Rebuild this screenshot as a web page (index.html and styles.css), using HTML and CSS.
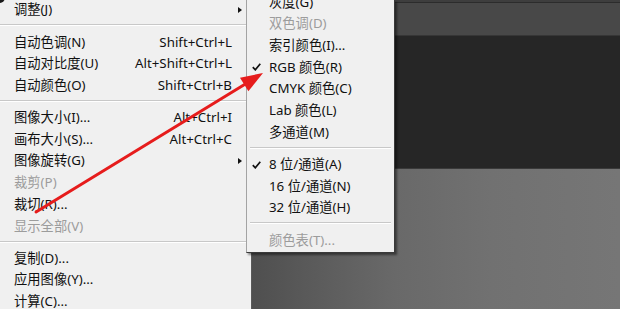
FILE: index.html
```html
<!DOCTYPE html>
<html lang="zh-CN">
<head>
<meta charset="utf-8">
<title>图像模式菜单</title>
<link rel="stylesheet" href="styles.css">
</head>
<body>
<div class="screen">
  <div class="menu main">
    <div class="list">
      <div class="item"><span class="label">调整(J)</span><span class="sub"></span></div>
      <div class="sep"></div>
      <div class="item"><span class="label">自动色调(N)</span><span class="key">Shift+Ctrl+L</span></div>
      <div class="item"><span class="label">自动对比度(U)</span><span class="key">Alt+Shift+Ctrl+L</span></div>
      <div class="item"><span class="label">自动颜色(O)</span><span class="key">Shift+Ctrl+B</span></div>
      <div class="sep"></div>
      <div class="item"><span class="label">图像大小(I)...</span><span class="key">Alt+Ctrl+I</span></div>
      <div class="item"><span class="label">画布大小(S)...</span><span class="key">Alt+Ctrl+C</span></div>
      <div class="item"><span class="label">图像旋转(G)</span><span class="sub"></span></div>
      <div class="item disabled"><span class="label">裁剪(P)</span></div>
      <div class="item"><span class="label">裁切(R)...</span></div>
      <div class="item disabled"><span class="label">显示全部(V)</span></div>
      <div class="sep"></div>
      <div class="item"><span class="label">复制(D)...</span></div>
      <div class="item"><span class="label">应用图像(Y)...</span></div>
      <div class="item"><span class="label">计算(C)...</span></div>
    </div>
  </div>
  <div class="workspace">
    <div class="tabbar"></div>
    <div class="optbar"></div>
    <div class="panel"></div>
    <div class="canvas"></div>
  </div>
  <div class="menu submenu">
    <div class="list">
      <div class="item"><span class="chk"></span><span class="label">灰度(G)</span></div>
      <div class="item disabled"><span class="chk"></span><span class="label">双色调(D)</span></div>
      <div class="item"><span class="chk"></span><span class="label">索引颜色(I)...</span></div>
      <div class="item"><span class="chk"><svg width="9" height="8" viewBox="0 0 9 8"><path d="M0.8 4.2 L3.3 6.8 L8.3 0.8" fill="none" stroke="#111" stroke-width="1.7"/></svg></span><span class="label">RGB 颜色(R)</span></div>
      <div class="item"><span class="chk"></span><span class="label">CMYK 颜色(C)</span></div>
      <div class="item"><span class="chk"></span><span class="label">Lab 颜色(L)</span></div>
      <div class="item"><span class="chk"></span><span class="label">多通道(M)</span></div>
      <div class="sep"></div>
      <div class="item"><span class="chk"><svg width="9" height="8" viewBox="0 0 9 8"><path d="M0.8 4.2 L3.3 6.8 L8.3 0.8" fill="none" stroke="#111" stroke-width="1.7"/></svg></span><span class="label">8 位/通道(A)</span></div>
      <div class="item"><span class="chk"></span><span class="label">16 位/通道(N)</span></div>
      <div class="item"><span class="chk"></span><span class="label">32 位/通道(H)</span></div>
      <div class="sep"></div>
      <div class="item disabled"><span class="chk"></span><span class="label">颜色表(T)...</span></div>
    </div>
  </div>
  <svg class="pointer" width="620" height="309" viewBox="0 0 620 309">
    <line x1="36" y1="212" x2="247" y2="83" stroke="#e61c1c" stroke-width="3" stroke-linecap="round"/>
    <polygon points="263,73 248.4,91.3 240,77.7" fill="#e61c1c"/>
  </svg>
</div>
</body>
</html>
```
FILE: styles.css
```css
html, body {
  margin: 0;
  padding: 0;
}
body {
  width: 620px;
  height: 309px;
  overflow: hidden;
  font-family: "Noto Sans", "Noto Sans CJK SC", sans-serif;
  font-size: 13.3px;
  color: #111;
}
.screen {
  position: relative;
  display: flex;
  width: 620px;
  height: 309px;
  overflow: hidden;
}
.menu {
  background: #f0f0f0;
}
.main {
  position: relative;
  width: 251px;
  flex: none;
  border-right: 1px solid #5a5a5a;
  overflow: hidden;
}
.main::before {
  content: "";
  position: absolute;
  left: -6px;
  top: -8px;
  width: 11px;
  height: 11px;
  border-radius: 50%;
  background: #1a1a1a;
}
.main .list {
  margin-top: -0.85px;
}
.item {
  display: flex;
  align-items: center;
  height: 21.7px;
  white-space: nowrap;
  line-height: 1;
}
.main .item {
  padding: 0 9px 0 14px;
}
.disabled {
  color: #9c9c9c;
}
.key {
  margin-left: auto;
  margin-right: 10px;
}
.sub {
  margin-left: auto;
  width: 0;
  height: 0;
  border-top: 3.5px solid transparent;
  border-bottom: 3.5px solid transparent;
  border-left: 4px solid #111;
}
.sep {
  margin: 3.5px 0 5px;
  border-top: 1px solid #c8c8c8;
  border-bottom: 1px solid #ffffff;
}
.workspace {
  flex: 1;
  display: flex;
  flex-direction: column;
}
.tabbar {
  height: 2px;
  background: #3e3e3e;
  border-bottom: 1px solid #2c2c2c;
}
.optbar {
  height: 32px;
  background: #484848;
  border-bottom: 1px solid #363636;
}
.panel {
  height: 132px;
  background: #262626;
  border-bottom: 1px solid #3a3a3a;
}
.canvas {
  flex: 1;
  background: linear-gradient(90deg, #4f4f4f 0%, #5d5d5d 20%, #696969 39%, #717171 65%, #767676 100%);
}
.submenu {
  position: absolute;
  left: 246px;
  top: 0;
  width: 147px;
  padding-bottom: 1px;
  border-left: 1px solid #a3a3a3;
  border-right: 1px solid #3a3a3a;
  border-bottom: 1px solid #3a3a3a;
  box-shadow: 2px 2px 2px rgba(0, 0, 0, 0.45);
  overflow: hidden;
}
.submenu .list {
  margin-top: -8.5px;
}
.submenu .item {
  padding-left: 4px;
}
.chk {
  width: 18px;
  flex: none;
  display: flex;
  align-items: center;
  padding-left: 1px;
  box-sizing: border-box;
}
.chk svg {
  display: block;
}
.submenu .sep {
  margin: 3.5px 3px 5px 3px;
}
.pointer {
  position: absolute;
  left: 0;
  top: 0;
  pointer-events: none;
}
```
